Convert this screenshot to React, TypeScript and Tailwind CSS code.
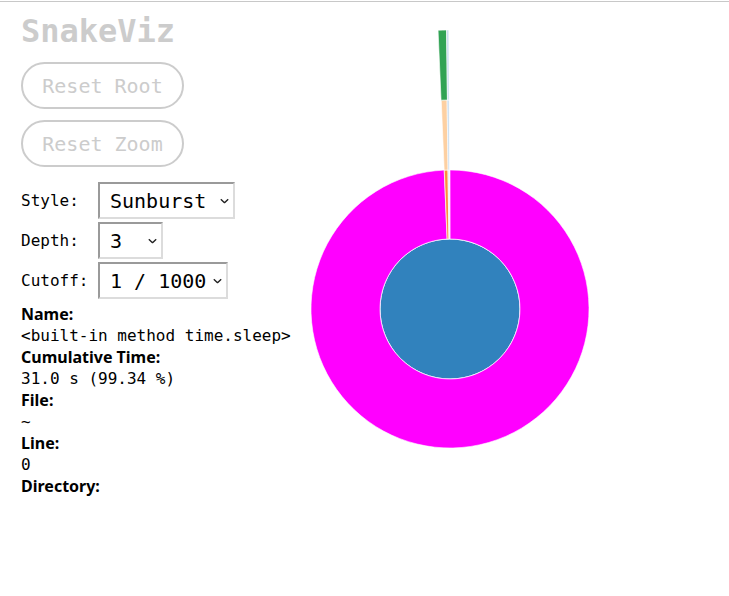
import React from "react";

const MONO = "font-['DejaVu_Sans_Mono',monospace]";
const SANS = "font-['Noto_Sans',sans-serif]";

// clockwise from 12 o'clock, degrees
function arc(r0: number, r1: number, a0: number, a1: number) {
  const p = (r: number, a: number) => {
    const t = (a * Math.PI) / 180;
    return `${(r * Math.sin(t)).toFixed(3)} ${(-r * Math.cos(t)).toFixed(3)}`;
  };
  const large = a1 - a0 > 180 ? 1 : 0;
  return `M${p(r1, a0)} A${r1} ${r1} 0 ${large} 1 ${p(r1, a1)} L${p(r0, a1)} A${r0} ${r0} 0 ${large} 0 ${p(r0, a0)} Z`;
}

const slices = [
  { r0: 70, r1: 139, a0: 0, a1: 357.6, fill: "#ff00ff" },
  { r0: 70, r1: 139, a0: 357.65, a1: 359.15, fill: "#fd8d3c" },
  { r0: 70, r1: 139, a0: 359.15, a1: 359.8, fill: "#deebf7" },
  { r0: 139, r1: 209, a0: 357.6, a1: 359.2, fill: "#fdd0a2" },
  { r0: 139, r1: 209, a0: 359.2, a1: 359.75, fill: "#c6dbef" },
  { r0: 209, r1: 279, a0: 357.55, a1: 359.3, fill: "#31a354" },
  { r0: 209, r1: 279, a0: 359.3, a1: 359.75, fill: "#c6dbef" },
];

function Sunburst() {
  return (
    <svg width={300} height={560} viewBox="-150 -279 300 560" className="mt-[28px] shrink-0">
      <circle r={70} fill="#3182bd" stroke="#fff" strokeWidth={1} />
      {slices.map((s, i) => (
        <path key={i} d={arc(s.r0, s.r1, s.a0, s.a1)} fill={s.fill} stroke="#fff" strokeWidth={0.6} />
      ))}
    </svg>
  );
}

function Select({ value, options, width }: { value: string; options: string[]; width: string }) {
  return (
    <div className={`relative ${width}`}>
      <select
        defaultValue={value}
        className={`${MONO} h-[37px] w-full appearance-none border-2 border-t-[#9a9a9a] border-l-[#9a9a9a] border-b-[#dcdcdc] border-r-[#dcdcdc] bg-white pl-[10px] text-[20px] text-black outline-none`}
      >
        {options.map((o) => (
          <option key={o}>{o}</option>
        ))}
      </select>
      <svg
        width={9}
        height={5}
        viewBox="0 0 9 5"
        className="pointer-events-none absolute right-[6px] top-1/2 -translate-y-1/2"
      >
        <path d="M0.8 0.8 L4.5 4.2 L8.2 0.8" fill="none" stroke="#222" strokeWidth={1.4} />
      </svg>
    </div>
  );
}

function Row({ label, children }: { label: string; children: React.ReactNode }) {
  return (
    <div className="flex items-center">
      <span className={`${MONO} w-[77px] text-[16px] text-black`}>{label}</span>
      {children}
    </div>
  );
}

const info: [string, string][] = [
  ["Name:", "<built-in method time.sleep>"],
  ["Cumulative Time:", "31.0 s (99.34 %)"],
  ["File:", "~"],
  ["Line:", "0"],
  ["Directory:", ""],
];

export default function App() {
  return (
    <div className="min-h-screen bg-white pt-px">
      <div className="h-px bg-[#c8c8c8]" />
      <div className="flex items-start pl-[21px]">
        <div className="flex w-[279px] shrink-0 flex-col items-start">
          <h1 className={`${MONO} mt-[10px] text-[32px] font-bold leading-[38px] text-[#cccccc]`}>SnakeViz</h1>
          <button
            className={`${MONO} mt-[12px] h-[47px] w-[163px] rounded-full border-2 border-[#cccccc] text-[20px] text-[#cccccc]`}
          >
            Reset Root
          </button>
          <button
            className={`${MONO} mt-[11px] h-[47px] w-[163px] rounded-full border-2 border-[#cccccc] text-[20px] text-[#cccccc]`}
          >
            Reset Zoom
          </button>
          <div className="mt-[15px] flex flex-col gap-[3px]">
            <Row label="Style:">
              <Select value="Sunburst" options={["Sunburst", "Icicle"]} width="w-[137px]" />
            </Row>
            <Row label="Depth:">
              <Select value="3" options={["3", "5", "10"]} width="w-[65px]" />
            </Row>
            <Row label="Cutoff:">
              <Select value="1 / 1000" options={["1 / 1000", "1 / 100", "1 / 10"]} width="w-[130px]" />
            </Row>
          </div>
          <div className="mt-[4px] flex flex-col">
            {info.map(([k, v]) => (
              <div key={k}>
                <div className={`${SANS} text-[16px] font-bold leading-[23px] text-black`}>{k}</div>
                <div className={`${MONO} h-[20px] whitespace-pre text-[16px] leading-[20px] text-black`}>{v}</div>
              </div>
            ))}
          </div>
        </div>
        <Sunburst />
      </div>
    </div>
  );
}
